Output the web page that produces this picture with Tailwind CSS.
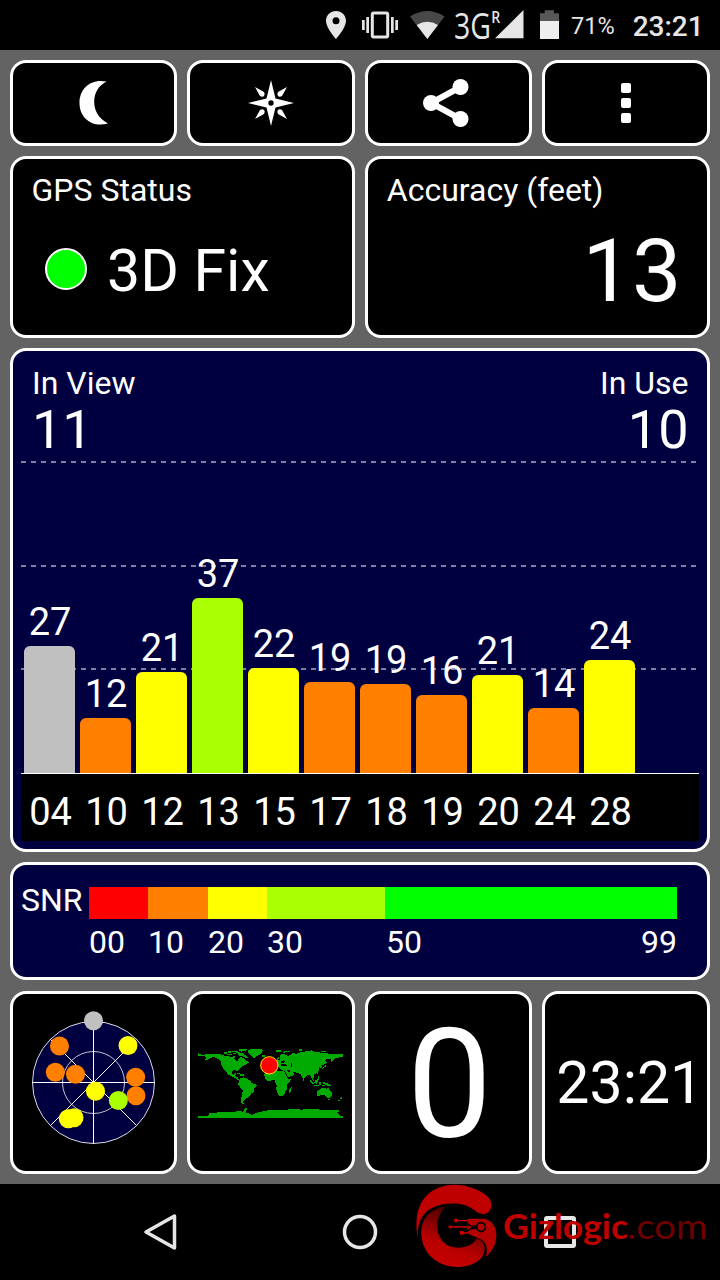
<!DOCTYPE html>
<html lang="en">
<head>
    <meta charset="UTF-8">
    <meta name="viewport" content="width=device-width, initial-scale=1.0">
    <title>GPS Status</title>
    <script src="https://cdn.jsdelivr.net/npm/@tailwindcss/browser@4"></script>
</head>
<body class="w-[720px] h-[1280px] overflow-hidden flex flex-col bg-black text-white font-[Roboto,sans-serif]">
    <!-- Status bar -->
    <header class="h-[50px] shrink-0 flex items-start text-[#e6e6e6]">
        <svg class="ml-[326px] w-[20px] h-[50px]" viewBox="0 0 20 50" fill="#e6e6e6">
            <path fill-rule="evenodd" d="M10 11C4.400 11 0 15.400 0 20.800C0 28 10 39 10 39S20 28 20 20.800C20 15.400 15.600 11 10 11ZM10 17.200a3.500 3.500 0 1 1 0 7a3.500 3.500 0 0 1 0-7Z"/>
        </svg>
        <svg class="ml-4 w-[36px] h-[50px]" viewBox="0 0 36 50" fill="#e6e6e6">
            <path d="M0 20h2.700v10H0zM4.300 17h2.700v16H4.300zM29 17h2.700v16H29zM33.300 20H36v10h-2.700z"/>
            <rect x="10.300" y="13" width="15.400" height="24" rx="1.500" fill="none" stroke="#e6e6e6" stroke-width="3"/>
        </svg>
        <svg class="ml-3 w-[35px] h-[50px]" viewBox="0 0 35 50">
            <path d="M17.300 39L0 16.500Q17.300 5.500 34.600 16.500Z" fill="#484848"/>
            <path d="M17.300 39L6.700 25Q17.300 18.500 28 25Z" fill="#e6e6e6"/>
        </svg>
        <svg class="ml-[9px] w-[70px] h-[50px]" viewBox="0 0 70 50" fill="#e6e6e6">
            <text x="0" y="38.500" font-family="Open Sans" font-size="36" textLength="37" lengthAdjust="spacingAndGlyphs">3G</text>
            <text x="37.200" y="22.500" font-family="Open Sans" font-size="16.500" font-weight="600" textLength="9" lengthAdjust="spacingAndGlyphs">R</text>
            <path d="M41 38.300L69.500 10V38.300Z"/>
        </svg>
        <svg class="ml-[16px] w-[19px] h-[50px]" viewBox="0 0 19 50">
            <path d="M0 21V13.300H4.700V10.300H14V13.300H19V21Z" fill="#585858"/>
            <path d="M0 21H19V39H0Z" fill="#eee"/>
        </svg>
        <span class="ml-[12px] text-[23.5px] leading-[52px]">71%</span>
        <span class="ml-[18px] text-[28px] leading-[53px] font-medium">23:21</span>
    </header>

    <main class="h-[1134px] shrink-0 bg-[#636363] pt-[10px] pl-[10px] pr-[10.5px]">
        <!-- Toolbar -->
        <div class="grid grid-cols-4 gap-[10px]">
            <button class="h-[86px] rounded-[16px] border-3 border-white bg-black flex items-center justify-center">
                <svg class="w-[30px] h-[46px]" viewBox="0 0 30 46" fill="#fff">
                    <path d="M27.500 1.500C11 -1.500 0.500 9 0.500 23C0.500 38 13 48 29 43.500C19 38 15.200 30 15.200 22C15.200 13 19.500 5.500 27.500 1.500Z"/>
                </svg>
            </button>
            <button class="h-[86px] rounded-[16px] border-3 border-white bg-black flex items-center justify-center">
                <svg class="w-[46px] h-[46px]" viewBox="-23 -23 46 46" fill="#fff">
                    <path fill-rule="evenodd" d="M0-23L4.500-4.500L23 0L4.500 4.500L0 23L-4.500 4.500L-23 0L-4.500-4.500ZM0-2.700a2.700 2.700 0 1 0 0 5.400a2.700 2.700 0 0 0 0-5.400Z"/>
                    <path d="M16-16L11-7Q8.500-5.500 7-7Q5.500-8.500 7-11ZM-16-16L-11-7Q-8.500-5.500-7-7Q-5.500-8.500-7-11ZM16 16L11 7Q8.500 5.500 7 7Q5.500 8.500 7 11ZM-16 16L-11 7Q-8.500 5.500-7 7Q-5.500 8.500-7 11Z"/>
                </svg>
            </button>
            <button class="h-[86px] rounded-[16px] border-3 border-white bg-black flex items-center justify-center">
                <svg class="w-[50px] h-[50px] -ml-[5px]" viewBox="0 0 50 50">
                    <path d="M39.500 9L10 25L39.500 41" fill="none" stroke="#fff" stroke-width="6"/>
                    <g fill="#fff"><circle cx="39.500" cy="9" r="8"/><circle cx="10" cy="25" r="8"/><circle cx="39.500" cy="41" r="8"/></g>
                </svg>
            </button>
            <button class="h-[86px] rounded-[16px] border-3 border-white bg-black flex flex-col items-center justify-center gap-[5px]">
                <span class="size-[10px] rounded-[2px] bg-white"></span>
                <span class="size-[10px] rounded-[2px] bg-white"></span>
                <span class="size-[10px] rounded-[2px] bg-white"></span>
            </button>
        </div>

        <!-- Fix and accuracy -->
        <div class="mt-[10px] grid grid-cols-2 gap-[10px]">
            <section class="h-[182px] rounded-[16px] border-3 border-white bg-black pt-[11px] pl-[18.5px]">
                <h2 class="text-[32px] leading-[40px]">GPS Status</h2>
                <div class="mt-[31px] pl-[13.5px] flex items-center">
                    <span class="size-[42px] mb-1 rounded-full border-2 border-white bg-[#00ff00]"></span>
                    <span class="ml-[20px] text-[59px] leading-[60px]">3D Fix</span>
                </div>
            </section>
            <section class="h-[182px] rounded-[16px] border-3 border-white bg-black pt-[11px] pl-[19px] pr-[25px]">
                <h2 class="text-[32px] leading-[40px]">Accuracy (feet)</h2>
                <p class="mt-4 text-right text-[88px] leading-[90px]">13</p>
            </section>
        </div>

        <!-- Signal chart -->
        <section class="mt-[10px] h-[504px] rounded-[16px] border-3 border-white bg-[#000040] px-[8px] pt-[12px]">
            <div class="flex justify-between pl-[11px] pr-[10px]">
                <div>
                    <h2 class="text-[32px] leading-[40px]">In View</h2>
                    <p class="text-[54px] leading-[54px]">11</p>
                </div>
                <div class="text-right">
                    <h2 class="text-[32px] leading-[40px]">In Use</h2>
                    <p class="text-[54px] leading-[54px]">10</p>
                </div>
            </div>
            <div class="relative h-[316px]">
                <div class="absolute left-0 top-[4px] w-[675px] h-[2px] bg-[repeating-linear-gradient(90deg,#8080a0_0_5px,transparent_5px_10px)]"></div>
                <div class="absolute left-0 top-[108px] w-[675px] h-[2px] bg-[repeating-linear-gradient(90deg,#8080a0_0_5px,transparent_5px_10px)]"></div>
                <div class="absolute left-0 top-[211px] w-[675px] h-[2px] bg-[repeating-linear-gradient(90deg,#8080a0_0_5px,transparent_5px_10px)]"></div>
                <div class="relative h-full pl-[3px] flex items-end gap-[5px] text-[38px] leading-[40px] text-center">
                    <div class="w-[51px]"><p class="mb-1 pl-px">27</p><div class="h-[127px] rounded-t-[6px] bg-[#c0c0c0]"></div></div>
                    <div class="w-[51px]"><p class="mb-1 pl-px">12</p><div class="h-[55px] rounded-t-[6px] bg-[#ff8000]"></div></div>
                    <div class="w-[51px]"><p class="mb-1 pl-px">21</p><div class="h-[101px] rounded-t-[6px] bg-[#ffff00]"></div></div>
                    <div class="w-[51px]"><p class="mb-1 pl-px">37</p><div class="h-[175px] rounded-t-[6px] bg-[#aaff00]"></div></div>
                    <div class="w-[51px]"><p class="mb-1 pl-px">22</p><div class="h-[105px] rounded-t-[6px] bg-[#ffff00]"></div></div>
                    <div class="w-[51px]"><p class="mb-1 pl-px">19</p><div class="h-[91px] rounded-t-[6px] bg-[#ff8000]"></div></div>
                    <div class="w-[51px]"><p class="mb-1 pl-px">19</p><div class="h-[89px] rounded-t-[6px] bg-[#ff8000]"></div></div>
                    <div class="w-[51px]"><p class="mb-1 pl-px">16</p><div class="h-[78px] rounded-t-[6px] bg-[#ff8000]"></div></div>
                    <div class="w-[51px]"><p class="mb-1 pl-px">21</p><div class="h-[98px] rounded-t-[6px] bg-[#ffff00]"></div></div>
                    <div class="w-[51px]"><p class="mb-1 pl-px">14</p><div class="h-[65px] rounded-t-[6px] bg-[#ff8000]"></div></div>
                    <div class="w-[51px]"><p class="mb-1 pl-px">24</p><div class="h-[113px] rounded-t-[6px] bg-[#ffff00]"></div></div>
                </div>
            </div>
            <div class="h-[68px] w-[678px] border-t border-white bg-black pl-[4px] pt-[9px] flex gap-[5px] text-[38px] leading-[58px] text-center">
                <span class="w-[51px]">04</span>
                <span class="w-[51px]">10</span>
                <span class="w-[51px]">12</span>
                <span class="w-[51px]">13</span>
                <span class="w-[51px]">15</span>
                <span class="w-[51px]">17</span>
                <span class="w-[51px]">18</span>
                <span class="w-[51px]">19</span>
                <span class="w-[51px]">20</span>
                <span class="w-[51px]">24</span>
                <span class="w-[51px]">28</span>
            </div>
        </section>

        <!-- SNR legend -->
        <section class="mt-[10px] h-[118px] rounded-[16px] border-3 border-white bg-[#000040] pt-[22px] pl-[8px] flex items-start text-[32px]">
            <span class="w-[68px] leading-[27px]">SNR</span>
            <div class="w-[588px]">
                <div class="flex h-[32px]">
                    <div class="w-[59px] bg-[#ff0000]"></div>
                    <div class="w-[60px] bg-[#ff8000]"></div>
                    <div class="w-[59px] bg-[#ffff00]"></div>
                    <div class="w-[118px] bg-[#aaff00]"></div>
                    <div class="flex-1 bg-[#00ff00]"></div>
                </div>
                <div class="mt-[3px] flex leading-[40px]">
                    <span class="w-[59px]">00</span>
                    <span class="w-[60px]">10</span>
                    <span class="w-[59px]">20</span>
                    <span class="w-[119px]">30</span>
                    <span class="flex-1">50</span>
                    <span>99</span>
                </div>
            </div>
        </section>

        <!-- Widgets -->
        <div class="mt-[11px] grid grid-cols-4 gap-[10px]">
            <section class="h-[183px] rounded-[16px] border-3 border-white bg-black flex items-center justify-center">
                <svg class="w-[127px] h-[145px]" viewBox="90 90 381 435">
                    <circle cx="280.500" cy="307.500" r="183" fill="#000040"/>
                    <g fill="none" stroke="#fff" stroke-width="3">
                        <circle cx="280.500" cy="307.500" r="183" stroke="#dcdce6"/>
                        <circle cx="280.500" cy="307.500" r="93" stroke="#c4c4d4"/>
                        <path d="M280.500 124V491M97 307.500H464M151 178L410 437M410 178L151 437"/>
                    </g>
                    <g fill="#ff8000">
                        <circle cx="178.500" cy="198" r="28.500"/><circle cx="166" cy="276.500" r="28.500"/><circle cx="226.500" cy="282.500" r="28.500"/>
                        <circle cx="407" cy="291.500" r="28.500"/><circle cx="408" cy="347" r="28.500"/>
                    </g>
                    <g fill="#ffff00">
                        <circle cx="384" cy="196.500" r="28.500"/><circle cx="286.500" cy="333.500" r="28.500"/><circle cx="205" cy="416" r="28.500"/><circle cx="222" cy="413" r="28.500"/>
                    </g>
                    <circle cx="355" cy="361.500" r="28.500" fill="#aaff00"/>
                    <circle cx="280.500" cy="122.500" r="28.500" fill="#c0c0c0"/>
                </svg>
            </section>
            <section class="h-[183px] rounded-[16px] border-3 border-white bg-black flex items-center justify-center">
                <svg class="w-[158px] h-[72px]" viewBox="20 50 474 216" shape-rendering="crispEdges">
                    <g fill="#00aa00">
                        <!-- North and Central America -->
                        <path d="M38 68L48 73H57L66 70H84L110 73L122 78L140 79L150 76L147 84L152 90L158 94L160 85L166 79L176 84L182 91L190 95L186 99L182 104L174 106L168 111L163 116L159 121L156 122L149 119L142 120L139 128L144 133L151 129L150 137L157 140L158 147L164 148L162 151L154 147L145 140L135 137L127 131L122 123L116 117L109 108L108 96L104 90L95 84L84 80L74 84L65 89L57 87L66 83L58 80L60 77L38 77Z"/>
                        <path d="M115 66H124V70H115ZM126 70H141V74H126ZM128 63H138V67H128ZM141 61H157V64H141ZM144 68H153V72H144ZM157 69H171L180 74L188 82L182 84L173 78L160 75ZM160 57L186 55L184 60L169 64L160 62ZM152 65H165V67H152ZM166 90H172V94H166ZM183 96H192V99H183ZM154 128H163V131H154ZM165 132H177V136H165Z"/>
                        <path d="M188 60L202 55H228L234 60L229 66L225 72L213 77L208 84L201 81L195 72L187 68Z"/>
                        <path d="M230 75H240V79H230ZM272 60H288V64H272Z"/>
                        <!-- South America -->
                        <path d="M164 145L173 141L185 145L195 151L199 158L214 163L214 167L207 174L205 185L197 190L192 199L184 203L180 208L174 213L175 220L166 219L166 206L171 194L172 179L166 173L159 163L160 153Z"/>
                        <!-- Europe and Asia -->
                        <path d="M274 89L280 78L289 71L298 71L306 77L318 73L322 68L333 70L346 66L360 63L372 62L378 60L394 66L411 67L432 70L458 70L474 72V80L462 81L450 84L439 96L436 87L430 85L418 89L425 95L419 102L408 105L410 111L405 114L402 109L399 113L402 120L396 128L386 132L387 142L383 146L387 155L380 149L376 136L370 133L362 138L358 144L353 148L348 135L344 130L334 128L328 124L321 126L327 130L322 136L309 141L302 130L299 121L288 120L280 111L276 113L270 117L266 111L274 105L267 98Z"/>
                        <path d="M260 84L265 82L266 93L259 97Z"/>
                        <path d="M300 61H314V64H304L297 68H292ZM342 57H351V61H342ZM408 62H421V65H408ZM419 103H423V111H418L411 116L410 113L418 108ZM396 127H399V132H396ZM353 147H356V151H353Z"/>
                        <!-- Africa -->
                        <path d="M250 119L261 115L274 115L276 121L288 122L297 124L302 136L308 145L318 146L312 155L305 163V177L300 181L298 190L292 197L283 199L277 191L273 177L274 165L269 157L268 149L260 150L248 152L239 145L237 133L241 128Z"/>
                        <path d="M315 172L319 171L317 184L311 188L310 178Z"/>
                        <!-- Oceania -->
                        <path d="M371 147L378 151L387 160L384 162L375 156ZM388 151L397 146L399 153L394 160L387 158ZM387 163H400V166H387ZM402 154H407V163H402ZM397 138H402V148H397ZM412 155L424 158L434 163L438 168L430 167L419 163L411 159ZM409 164H418V166H409Z"/>
                        <path d="M394 182L402 179L408 173L419 172L423 176L428 171L432 179L440 185L441 193L433 203L424 201L417 194L407 194L397 199L394 192ZM428 205H433V208H428ZM467 200L471 204L464 207ZM459 208H465V213H459Z"/>
                        <!-- Antarctica -->
                        <path d="M38 258H67L72 249L92 247L118 244L140 245L161 242L174 244L177 235L185 233L183 243L180 248L196 250L199 254L210 249L231 243L248 240L277 239L304 238L327 236L348 238L370 236L397 237L428 240L460 240L463 243L453 247L463 253V258H474V264H38Z"/>
                    </g>
                    <g fill="#000">
                        <path d="M287 93L296 90L301 92L298 96L287 98ZM288 101H300L305 105L301 107L288 106ZM317 97H321V110H316ZM282 77L285 83L282 89L278 91L280 84ZM305 120L310 126H317L313 120Z"/>
                    </g>
                    <circle cx="252" cy="105" r="26" fill="#ff0000" stroke="#ffee00" stroke-width="3" shape-rendering="auto"/>
                </svg>
            </section>
            <section class="h-[183px] rounded-[16px] border-3 border-white bg-black flex items-center justify-center">
                <span class="text-[152px] leading-[178px] mt-[4px] ml-[2px]">0</span>
            </section>
            <section class="h-[183px] rounded-[16px] border-3 border-white bg-black flex items-center justify-center overflow-hidden">
                <span class="text-[59px] leading-[60px] ml-[8px]">23:21</span>
            </section>
        </div>
    </main>

    <!-- Navigation bar -->
    <nav class="relative h-[96px] shrink-0 flex items-center">
        <svg class="ml-[142px] w-[36px] h-[40px]" viewBox="0 0 36 40" fill="none" stroke="#e6e6e6" stroke-width="3.500" stroke-linejoin="round">
            <path d="M32.500 4V36L4 20Z"/>
        </svg>
        <svg class="ml-[162px] w-[40px] h-[40px]" viewBox="0 0 40 40" fill="none" stroke="#e6e6e6" stroke-width="3.500">
            <circle cx="20" cy="20" r="15.500"/>
        </svg>
        <span class="ml-[164px] size-[32px] rounded-[3px] border-[4px] border-[#e6e6e6]"></span>

        <!-- Site watermark, laid over the navigation bar -->
        <svg class="absolute left-[400px] top-[-9px] w-[320px] h-[105px]" viewBox="0 0 960 315">
            <defs>
                <linearGradient id="swoosh" x1="0.300" y1="1" x2="0.700" y2="0">
                    <stop offset="0" stop-color="#c80000"/>
                    <stop offset="0.350" stop-color="#b80000"/>
                    <stop offset="1" stop-color="#300000"/>
                </linearGradient>
            </defs>
            <path d="M54 193C42 130 53 77 96 48C148 16 216 28 260 62C279 77 278 104 262 114C250 120 238 117 228 109C204 88 176 83 143 86C82 91 48 127 54 193Z" fill="#be0000"/>
            <path d="M136 95C92 100 62 130 64 178C66 235 113 276 172 276C222 276 260 249 253 213C250 202 242 194 230 190C219 212 191 221 163 217C114 210 91 145 136 95Z" fill="url(#swoosh)"/>
            <path d="M188 131H250C278 135 290 157 289 183C288 208 277 230 257 246C266 218 259 197 232 188C222 184 216 182 208 178L202 174V131Z" fill="#b40000"/>
            <g fill="none" stroke="#000" stroke-width="5">
                <path d="M198 143L213 154H231M198 156H231M200 170L214 160H231"/>
                <circle cx="243" cy="156" r="13"/>
            </g>
            <g fill="none" stroke="#c80000" stroke-width="4">
                <path d="M168 137H202M151 156H214M185 174H202L210 168"/>
            </g>
            <path d="M163 131H174V142H163ZM143 156L154 150V162ZM180 168H190V179H180Z" fill="#c80000"/>
            <text x="309" y="191" font-family="Lato" font-weight="700" font-size="102" fill="#c00000" textLength="375" lengthAdjust="spacingAndGlyphs">Gizlogic</text>
            <text x="682" y="191" font-family="Lato" font-weight="400" font-size="102" fill="#700000" textLength="240" lengthAdjust="spacingAndGlyphs">.com</text>
        </svg>
    </nav>
</body>
</html>
